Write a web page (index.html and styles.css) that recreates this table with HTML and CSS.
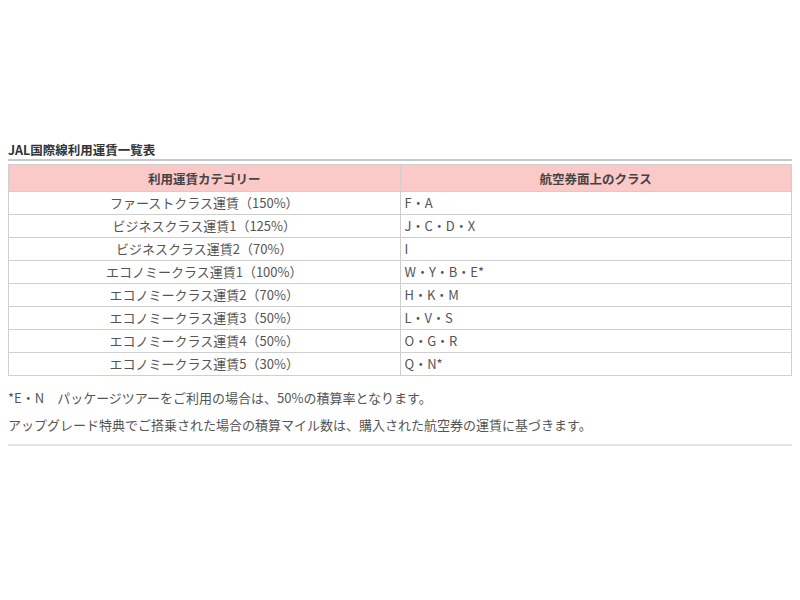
FILE: index.html
```html
<!DOCTYPE html>
<html lang="ja">
<head>
<meta charset="utf-8">
<link rel="stylesheet" href="styles.css">
</head>
<body>
<div class="page">
  <div class="section">
    <h3 class="title">JAL国際線利用運賃一覧表</h3>
    <table class="fares">
      <thead>
        <tr><th>利用運賃カテゴリー</th><th>航空券面上のクラス</th></tr>
      </thead>
      <tbody>
        <tr><td class="cat">ファーストクラス運賃（150%）</td><td class="cls">F・A</td></tr>
        <tr><td class="cat">ビジネスクラス運賃1（125%）</td><td class="cls">J・C・D・X</td></tr>
        <tr><td class="cat">ビジネスクラス運賃2（70%）</td><td class="cls">I</td></tr>
        <tr><td class="cat">エコノミークラス運賃1（100%）</td><td class="cls">W・Y・B・E*</td></tr>
        <tr><td class="cat">エコノミークラス運賃2（70%）</td><td class="cls">H・K・M</td></tr>
        <tr><td class="cat">エコノミークラス運賃3（50%）</td><td class="cls">L・V・S</td></tr>
        <tr><td class="cat">エコノミークラス運賃4（50%）</td><td class="cls">O・G・R</td></tr>
        <tr><td class="cat">エコノミークラス運賃5（30%）</td><td class="cls">Q・N*</td></tr>
      </tbody>
    </table>
    <p class="note note-first">*E・N　パッケージツアーをご利用の場合は、50%の積算率となります。</p>
    <p class="note">アップグレード特典でご搭乗された場合の積算マイル数は、購入された航空券の運賃に基づきます。</p>
  </div>
</div>
</body>
</html>
```
FILE: styles.css
```css
html, body {
  margin: 0;
  padding: 0;
  background: #ffffff;
}
body {
  font-family: "Noto Sans CJK JP", "Noto Sans", sans-serif;
  color: #555555;
  font-size: 13px;
}
.page {
  padding-top: 140px;
}
.section {
  margin: 0 8px;
  padding-bottom: 10px;
  border-bottom: 2px solid #e4e4e4;
}
.title {
  margin: 0 0 3px 0;
  font-size: 12.5px;
  line-height: 19px;
  font-weight: bold;
  color: #333333;
  border-bottom: 2px solid #c8c8c8;
}
.fares {
  width: 100%;
  border-collapse: collapse;
  table-layout: fixed;
}
.fares th,
.fares td {
  border: 1px solid #cfcfcf;
  padding: 0;
}
.fares th {
  background: #fcc9c9;
  height: 26px;
  font-size: 12.5px;
  font-weight: bold;
  color: #444444;
  text-align: center;
}
.fares td {
  height: 22px;
  font-size: 13px;
  line-height: 22px;
}
.fares td.cat {
  text-align: center;
}
.fares td.cls {
  text-align: left;
  padding-left: 4px;
}
.note {
  margin: 0;
  font-size: 13px;
  line-height: 18px;
  margin-top: 9px;
}
.note-first {
  margin-top: 13px;
}
```
